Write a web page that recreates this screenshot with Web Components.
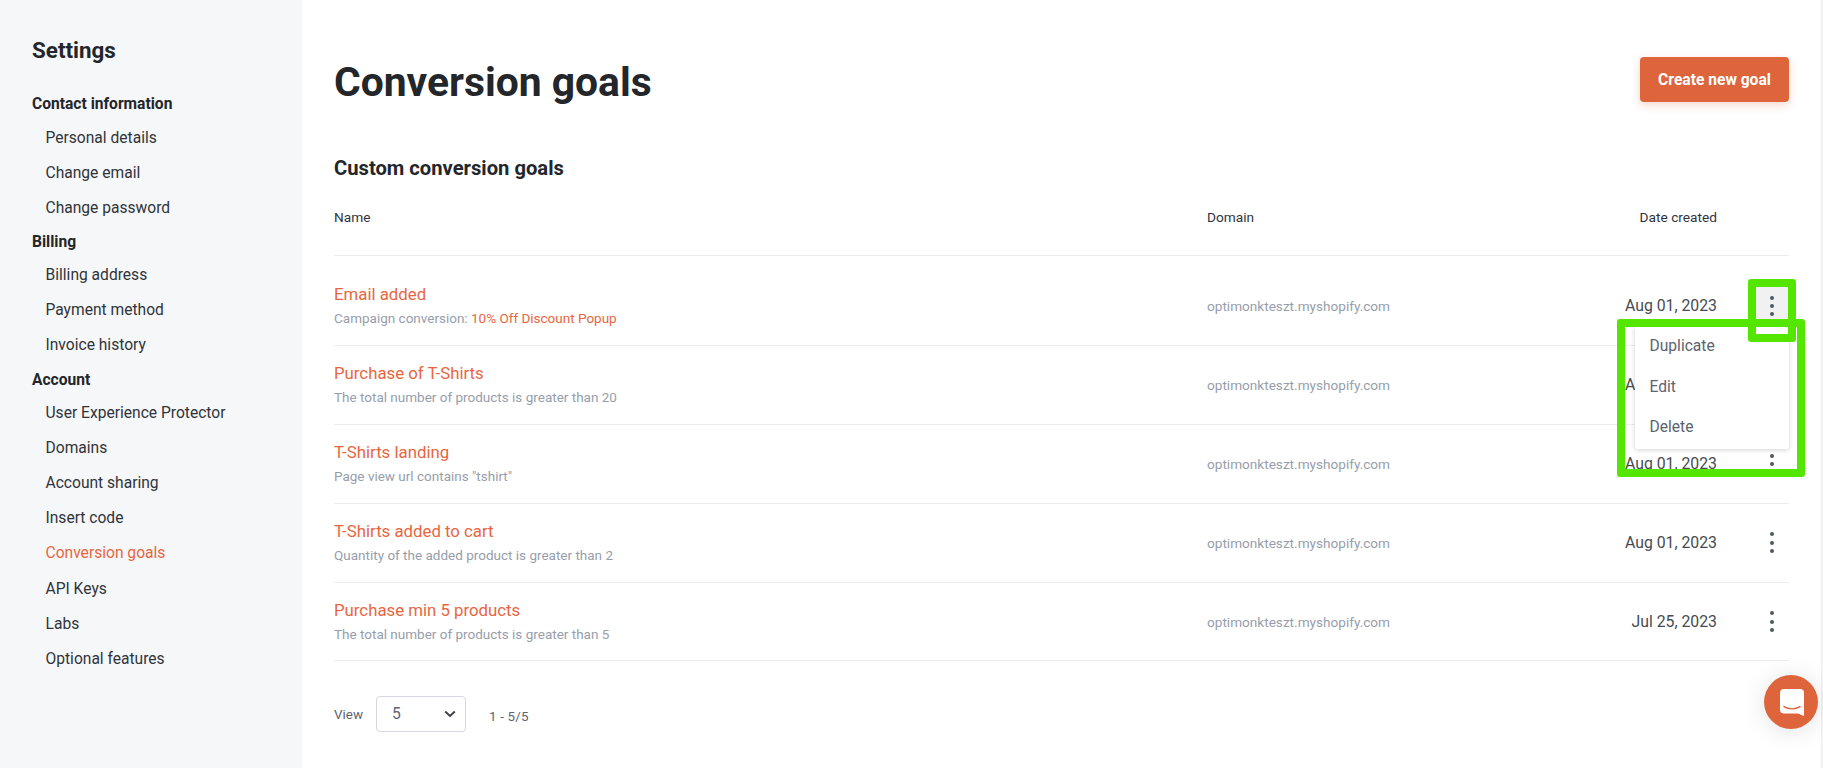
<!DOCTYPE html>
<html>
<head>
<meta charset="utf-8">
<title>Conversion goals</title>
<style>
	html, body { margin: 0; height: 100%; background: #fff; }
	body { font-family: Roboto, "Liberation Sans", sans-serif; color: #23262a; overflow: hidden; }
</style>
</head>
<body>
<settings-page></settings-page>

<script>
class NavSection extends HTMLElement {
	constructor() {
		super();
		this.attachShadow({ mode: "open" });
		this.shadowRoot.innerHTML = `
<style>
	:host { display: block; }
	h4 { margin: 0; height: 32.5px; line-height: 32.5px; font-size: 15.6px; font-weight: 700; color: #23262a; }
	div { display: flex; flex-direction: column; padding-left: 13.5px; }
</style>
<h4>${this.getAttribute("title")}</h4>
<div><slot></slot></div>`;
	}
}
customElements.define("nav-section", NavSection);

class NavItem extends HTMLElement {
	constructor() {
		super();
		this.attachShadow({ mode: "open" });
		this.shadowRoot.innerHTML = `
<style>
	:host { display: block; height: 35.1px; line-height: 35.1px; font-size: 15.6px; color: #2f343a; }
	:host([active]) { color: #e8663f; }
</style>
<slot></slot>`;
	}
}
customElements.define("nav-item", NavItem);

class SettingsNav extends HTMLElement {
	constructor() {
		super();
		this.attachShadow({ mode: "open" });
		this.shadowRoot.innerHTML = `
<style>
	:host { display: block; width: 302px; flex: none; box-sizing: border-box; padding: 36px 0 0 32px; background: #f6f7f9; }
	h2 { margin: 0 0 24px; height: 28px; line-height: 28px; font-size: 22.4px; font-weight: 700; color: #23262a; }
</style>
<h2>Settings</h2>
<nav-section title="Contact information">
	<nav-item>Personal details</nav-item>
	<nav-item>Change email</nav-item>
	<nav-item>Change password</nav-item>
</nav-section>
<nav-section title="Billing">
	<nav-item>Billing address</nav-item>
	<nav-item>Payment method</nav-item>
	<nav-item>Invoice history</nav-item>
</nav-section>
<nav-section title="Account">
	<nav-item>User Experience Protector</nav-item>
	<nav-item>Domains</nav-item>
	<nav-item>Account sharing</nav-item>
	<nav-item>Insert code</nav-item>
	<nav-item active>Conversion goals</nav-item>
	<nav-item>API Keys</nav-item>
	<nav-item>Labs</nav-item>
	<nav-item>Optional features</nav-item>
</nav-section>`;
	}
}
customElements.define("settings-nav", SettingsNav);

class KebabMenu extends HTMLElement {
	constructor() {
		super();
		this.attachShadow({ mode: "open" });
		this.shadowRoot.innerHTML = `
<style>
	:host { display: block; position: relative; width: 32px; height: 46px; }
	.btn { display: flex; flex-direction: column; align-items: center; justify-content: center; gap: 4.2px; width: 32px; height: 46px; border-radius: 3px; }
	:host([open]) .btn { background: #f1f1f1; }
	i { display: block; width: 4px; height: 4px; border-radius: 50%; background: #505763; }
	.menu { display: none; position: absolute; z-index: 2; top: 43px; right: -1px; width: 154px; box-sizing: border-box; padding: 0 14.5px 1px; background: #fff; border-radius: 3px; box-shadow: 0 1px 5px rgba(0,0,0,.18); font-size: 15.6px; color: #5d6370; }
	:host([open]) .menu { display: block; }
	.menu div { height: 40.7px; line-height: 40.7px; }
</style>
<div class="btn"><i></i><i></i><i></i></div>
<div class="menu">
	<div>Duplicate</div>
	<div>Edit</div>
	<div>Delete</div>
</div>`;
	}
}
customElements.define("kebab-menu", KebabMenu);

class GoalRow extends HTMLElement {
	constructor() {
		super();
		this.attachShadow({ mode: "open" });
		this.shadowRoot.innerHTML = `
<style>
	:host { display: grid; grid-template-columns: 873px 1fr 72px; align-items: center; height: 78.9px; box-sizing: border-box; border-bottom: 1px solid #ebecee; }
	.name { font-size: 16.8px; line-height: 22px; color: #e8663f; margin-top: -1px; }
	.sub { font-size: 13.5px; line-height: 20px; margin-top: 3px; color: #979eab; }
	.domain { font-size: 13.6px; color: #979eab; }
	.row-end { display: flex; justify-content: space-between; align-items: center; }
	.date { font-size: 15.8px; color: #474b51; text-align: right; }
	.act { display: flex; justify-content: flex-end; padding-right: 1px; }
</style>
<div>
	<div class="name"><slot name="name"></slot></div>
	<div class="sub"><slot name="sub"></slot></div>
</div>
<div class="row-end">
	<span class="domain"><slot name="domain"></slot></span>
	<span class="date"><slot name="date"></slot></span>
</div>
<div class="act"><slot name="action"></slot></div>`;
	}
}
customElements.define("goal-row", GoalRow);

class GoalsTable extends HTMLElement {
	constructor() {
		super();
		this.attachShadow({ mode: "open" });
		const rows = [
			["Email added", `Campaign conversion: <span style="color:#e8663f">10% Off Discount Popup</span>`, "Aug 01, 2023", true],
			["Purchase of T-Shirts", "The total number of products is greater than 20", "Aug 01, 2023"],
			["T-Shirts landing", `Page view url contains "tshirt"`, "Aug 01, 2023"],
			["T-Shirts added to cart", "Quantity of the added product is greater than 2", "Aug 01, 2023"],
			["Purchase min 5 products", "The total number of products is greater than 5", "Jul 25, 2023"],
		];
		this.shadowRoot.innerHTML = `
<style>
	:host { display: block; }
	.head { display: grid; grid-template-columns: 873px 1fr 72px; align-items: center; height: 76.5px; box-sizing: border-box; border-bottom: 1px solid #ebecee; padding: 6px 0 6px; font-size: 13.7px; font-weight: 400; color: #2f343a; }
	.head div { display: flex; justify-content: space-between; }
	.list { padding-top: 11px; }
</style>
<div class="head">
	<span>Name</span>
	<div><span>Domain</span><span>Date created</span></div>
</div>
<div class="list">
${rows.map((r, i) => `
	<goal-row>
		<span slot="name">${r[0]}</span>
		<span slot="sub">${r[1]}</span>
		<span slot="domain">optimonkteszt.myshopify.com</span>
		<span slot="date">${r[2]}</span>
		<kebab-menu slot="action" ${r[3] ? "open" : ""}></kebab-menu>
	</goal-row>`).join("")}
</div>`;
	}
}
customElements.define("goals-table", GoalsTable);

class PagerBar extends HTMLElement {
	constructor() {
		super();
		this.attachShadow({ mode: "open" });
		this.shadowRoot.innerHTML = `
<style>
	:host { display: flex; align-items: center; margin-top: 35px; height: 36px; font-size: 13.4px; color: #5d6370; }
	.select { display: flex; align-items: center; justify-content: space-between; box-sizing: border-box; width: 90px; height: 36px; margin: 0 23px 0 13px; padding: 0 9px 0 15px; border: 1px solid #d5d8dd; border-radius: 4px; font-size: 15.6px; }
	.range { padding-top: 4px; letter-spacing: .2px; }
</style>
<span>View</span>
<div class="select"><span>5</span>
	<svg width="12" height="8" viewBox="0 0 12 8"><path d="M1.2 1.500 6 6l4.800-4.500" fill="none" stroke="#3e4247" stroke-width="2"/></svg>
</div>
<span class="range">1 - 5/5</span>`;
	}
}
customElements.define("pager-bar", PagerBar);

class ChatBubble extends HTMLElement {
	constructor() {
		super();
		this.attachShadow({ mode: "open" });
		this.shadowRoot.innerHTML = `
<style>
	:host { position: absolute; left: 1764px; top: 675px; z-index: 3; display: flex; align-items: center; justify-content: center; width: 54px; height: 54px; border-radius: 50%; background: #dd643b; box-shadow: 0 2px 24px rgba(0,0,0,.12); }
</style>
<svg width="24" height="27" viewBox="0 0 24 27" style="margin-left:1px">
	<path d="M4 0h16a4 4 0 0 1 4 4v23l-6-2.600H4a4 4 0 0 1-4-4V4a4 4 0 0 1 4-4z" fill="#fff"/>
	<path d="M4 17.600c4.500 3 11.500 3 16 0" fill="none" stroke="#dd643b" stroke-width="1.400" stroke-linecap="round"/>
</svg>`;
	}
}
customElements.define("chat-bubble", ChatBubble);

// the green boxes drawn over the screenshot
class MarkBox extends HTMLElement {
	constructor() {
		super();
		this.attachShadow({ mode: "open" });
		this.shadowRoot.innerHTML = `
<style>
	:host { position: absolute; z-index: 4; box-sizing: border-box; border: 8px solid #55e600; border-radius: 3px; pointer-events: none; }
</style>`;
	}
}
customElements.define("mark-box", MarkBox);

class SettingsPage extends HTMLElement {
	constructor() {
		super();
		this.attachShadow({ mode: "open" });
		this.shadowRoot.innerHTML = `
<style>
	:host { display: flex; position: relative; width: 100%; height: 768px; overflow: hidden; }
	main { flex: 1; min-width: 0; box-sizing: border-box; padding: 57px 32px 0 32px; }
	.top { display: flex; justify-content: space-between; align-items: center; height: 45px; }
	h1 { margin: 0; padding-top: 5px; font-size: 40.8px; line-height: 48px; font-weight: 700; color: #23262a; }
	button { width: 149px; height: 45px; border: 0; border-radius: 4px; background: #dd643b; color: #fff; font: 700 15.6px Roboto, sans-serif; box-shadow: 0 3px 10px rgba(221,100,59,.25); }
	h3 { margin: 53.5px 0 0; height: 24px; line-height: 24px; font-size: 20.2px; font-weight: 700; color: #23262a; }
	.bar { flex: none; width: 2px; background: #f1f1f1; }
</style>
<settings-nav></settings-nav>
<main>
	<div class="top">
		<h1>Conversion goals</h1>
		<button>Create new goal</button>
	</div>
	<h3>Custom conversion goals</h3>
	<goals-table></goals-table>
	<pager-bar></pager-bar>
</main>
<div class="bar"></div>
<chat-bubble></chat-bubble>
<mark-box style="left:1748px;top:279px;width:48px;height:63px"></mark-box>
<mark-box style="left:1617px;top:319px;width:188px;height:158px"></mark-box>`;
	}
}
customElements.define("settings-page", SettingsPage);
</script>
</body>
</html>
